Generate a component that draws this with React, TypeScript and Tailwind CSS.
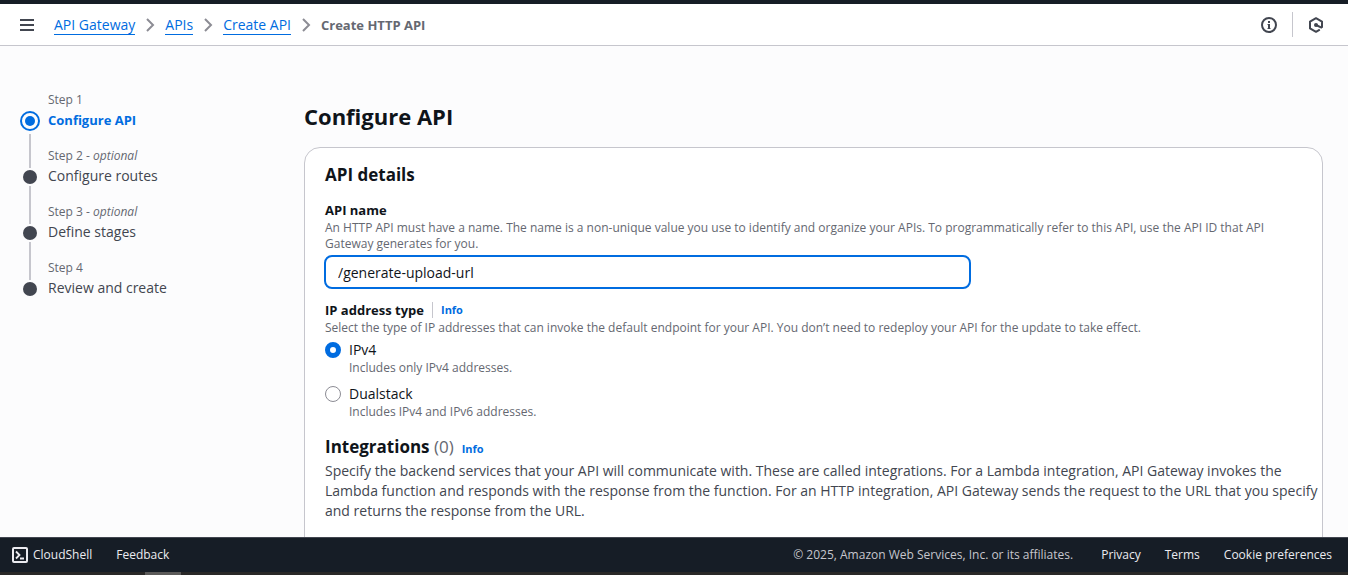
import { useState } from "react";

const steps = [
  { label: "Step 1", title: "Configure API", optional: false },
  { label: "Step 2", title: "Configure routes", optional: true },
  { label: "Step 3", title: "Define stages", optional: true },
  { label: "Step 4", title: "Review and create", optional: false },
];

const addressTypes = [
  { id: "ipv4", title: "IPv4", description: "Includes only IPv4 addresses." },
  { id: "dualstack", title: "Dualstack", description: "Includes IPv4 and IPv6 addresses." },
];

function Chevron() {
  return (
    <svg width="16" height="16" viewBox="0 0 16 16" fill="none" stroke="#8c8c94" strokeWidth="2" aria-hidden="true">
      <path d="M5 2l6 6-6 6" />
    </svg>
  );
}

function Header() {
  return (
    <header className="flex h-[42px] shrink-0 items-center border-b border-[#c6c6cd] bg-white pr-6 pl-5 text-[#424650]">
      <button type="button" aria-label="Open navigation" className="mr-5">
        <svg width="14" height="16" viewBox="0 0 14 16" stroke="currentColor" strokeWidth="2" aria-hidden="true">
          <path d="M0 3h14M0 8h14M0 13h14" />
        </svg>
      </button>
      <nav aria-label="Breadcrumbs" className="flex flex-1 items-center gap-[7px] text-sm leading-5">
        {["API Gateway", "APIs", "Create API"].map((name) => (
          <span key={name} className="flex items-center gap-[7px]">
            <a href="#" className="border-b border-[#006ce0] pt-px leading-[18px] text-[#006ce0]">
              {name}
            </a>
            <Chevron />
          </span>
        ))}
        <span className="text-[13px] font-bold text-[#656871]">Create HTTP API</span>
      </nav>
      <div className="flex items-center">
        <button type="button" aria-label="Info" className="pr-[15px]">
          <svg width="16" height="16" viewBox="0 0 16 16" fill="none" stroke="currentColor" strokeWidth="2" aria-hidden="true">
            <circle cx="8" cy="8" r="7" />
            <path d="M8 4v2M8 7v5" />
            <path d="M6.500 7.500H8M6.500 11.500h3" strokeWidth="1" />
          </svg>
        </button>
        <button type="button" aria-label="Tools" className="flex h-[25px] items-center border-l border-[#c6c6cd] pl-[15px]">
          <svg width="16" height="16" viewBox="0 0 16 16" fill="none" stroke="currentColor" strokeWidth="2" aria-hidden="true">
            <path d="M14 10.800V4.600L8 1.200 2 4.600v6.800l6 3.400 3.800-2.200" strokeLinejoin="round" />
            <circle cx="8" cy="8" r="2" fill="currentColor" stroke="none" />
            <path d="M8 8l6 2.800" />
          </svg>
        </button>
      </div>
    </header>
  );
}

function StepNav() {
  return (
    <nav aria-label="Steps" className="w-[304px] shrink-0 pt-[46px] pl-5">
      <ol>
        {steps.map((step, i) => (
          <li key={step.label} className="flex h-14 gap-2">
            <div className="flex w-5 shrink-0 flex-col items-center">
              <div className={i === 0 ? "h-4" : "h-5 w-0.5 bg-[#c6c6cd]"} />
              {i === 0 ? (
                <svg width="20" height="26" viewBox="0 0 20 26" className="shrink-0" aria-hidden="true">
                  <circle cx="10" cy="13" r="9" fill="none" stroke="#006ce0" strokeWidth="2" />
                  <circle cx="10" cy="13" r="5" fill="#006ce0" />
                </svg>
              ) : (
                <svg width="20" height="18" viewBox="0 0 20 18" className="shrink-0" aria-hidden="true">
                  <circle cx="10" cy="9" r="7" fill="#424650" />
                </svg>
              )}
              {i < steps.length - 1 && <div className="w-0.5 flex-1 bg-[#c6c6cd]" />}
            </div>
            <div>
              <div className="text-xs leading-4 text-[#656871]">
                {step.label}
                {step.optional && (
                  <>
                    {" - "}
                    <i>optional</i>
                  </>
                )}
              </div>
              <a
                href="#"
                className={
                  i === 0
                    ? "block text-[13px] leading-6 font-bold text-[#006ce0]"
                    : "block text-sm leading-6 text-[#424650]"
                }
              >
                {step.title}
              </a>
            </div>
          </li>
        ))}
      </ol>
    </nav>
  );
}

function InfoLink() {
  return (
    <a href="#" className="text-[11px] leading-4 font-bold text-[#006ce0]">
      Info
    </a>
  );
}

function Details() {
  const [name, setName] = useState("/generate-upload-url");
  const [type, setType] = useState("ipv4");
  return (
    <section className="mt-4 rounded-2xl border border-[#c6c6cd] bg-white px-5 pt-[15px] pb-16">
      <h2 className="text-[17px] leading-6 font-bold">API details</h2>
      <div className="pt-[13px]">
        <label htmlFor="api-name" className="block text-[13px] leading-5 font-bold">
          API name
        </label>
        <p className="text-xs leading-4 text-[#656871]">
          An HTTP API must have a name. The name is a non-unique value you use to identify and organize your APIs. To
          programmatically refer to this API, use the API ID that API Gateway generates for you.
        </p>
        <input
          id="api-name"
          type="text"
          value={name}
          onChange={(e) => setName(e.target.value)}
          className="mt-[3px] -ml-px block h-[34px] w-[calc(66%+2px)] rounded-lg border-2 border-[#006ce0] bg-white px-3 text-sm outline-none"
        />
      </div>
      <div role="radiogroup" aria-labelledby="address-type-label" className="pt-[11px]">
        <div className="flex items-center gap-2 leading-5">
          <span id="address-type-label" className="text-[13px] leading-5 font-bold">
            IP address type
          </span>
          <span className="flex border-l border-[#c6c6cd] pl-2">
            <InfoLink />
          </span>
        </div>
        <p className="text-xs leading-4 text-[#656871]">
          Select the type of IP addresses that can invoke the default endpoint for your API. You don’t need to redeploy
          your API for the update to take effect.
        </p>
        <div className="mt-1 flex flex-col gap-2">
          {addressTypes.map((option) => (
            <label key={option.id} htmlFor={option.id} className="flex gap-2">
              <input
                id={option.id}
                type="radio"
                name="address-type"
                checked={type === option.id}
                onChange={() => setType(option.id)}
                className="mt-0.5 size-4 shrink-0 appearance-none rounded-full border border-[#8c8c94] bg-white checked:border-[5px] checked:border-[#006ce0]"
              />
              <span>
                <span className="block text-sm leading-5">{option.title}</span>
                <span className="block text-xs leading-4 text-[#656871]">{option.description}</span>
              </span>
            </label>
          ))}
        </div>
      </div>
      <div className="pt-[15px]">
        <div className="flex items-baseline gap-2 pb-0.5">
          <h2 className="text-[17px] leading-6 font-bold">
            Integrations <span className="font-normal text-[#656871]">(0)</span>
          </h2>
          <InfoLink />
        </div>
        <p className="-mr-4 text-sm leading-5 text-[#424650]">
          Specify the backend services that your API will communicate with. These are called integrations. For a Lambda
          integration, API Gateway invokes the Lambda function and responds with the response from the function. For an
          HTTP integration, API Gateway sends the request to the URL that you specify and returns the response from the
          URL.
        </p>
      </div>
    </section>
  );
}

function Footer() {
  return (
    <footer className="shrink-0 bg-[#161d26] text-xs font-medium text-[#ebebf0]">
      <div className="flex h-[35px] items-center border-t border-[#424650] pr-4 pl-3">
        <a href="#" className="flex items-center gap-[5px]">
          <svg width="16" height="16" viewBox="0 0 16 16" fill="none" stroke="currentColor" strokeWidth="2" aria-hidden="true">
            <rect x="1" y="1" width="14" height="14" rx="1" />
            <path d="M4 4.500L7.500 8 4 11.500M8 11.500h4" strokeWidth="1.800" />
          </svg>
          CloudShell
        </a>
        <a href="#" className="ml-6">
          Feedback
        </a>
        <span className="ml-auto font-normal text-[#c6c6cd]">© 2025, Amazon Web Services, Inc. or its affiliates.</span>
        <a href="#" className="ml-7">
          Privacy
        </a>
        <a href="#" className="ml-6">
          Terms
        </a>
        <a href="#" className="ml-6">
          Cookie preferences
        </a>
      </div>
      <div className="h-[3px] bg-[#292827] pl-[145px]">
        <div className="h-full w-9 bg-[#5b5a59]" />
      </div>
    </footer>
  );
}

export default function App() {
  return (
    <div className="flex h-screen flex-col bg-[#fcfcfd] font-['Open_Sans',sans-serif] text-[#0f141a]">
      <div className="h-1 shrink-0 bg-[#161d26]" />
      <Header />
      <div className="flex min-h-0 flex-1 overflow-y-auto [scrollbar-width:none]">
        <StepNav />
        <main className="min-w-0 flex-1 pt-[55px] pr-[25px]">
          <h1 className="text-[22px] leading-[30px] font-bold">Configure API</h1>
          <Details />
        </main>
      </div>
      <Footer />
    </div>
  );
}
